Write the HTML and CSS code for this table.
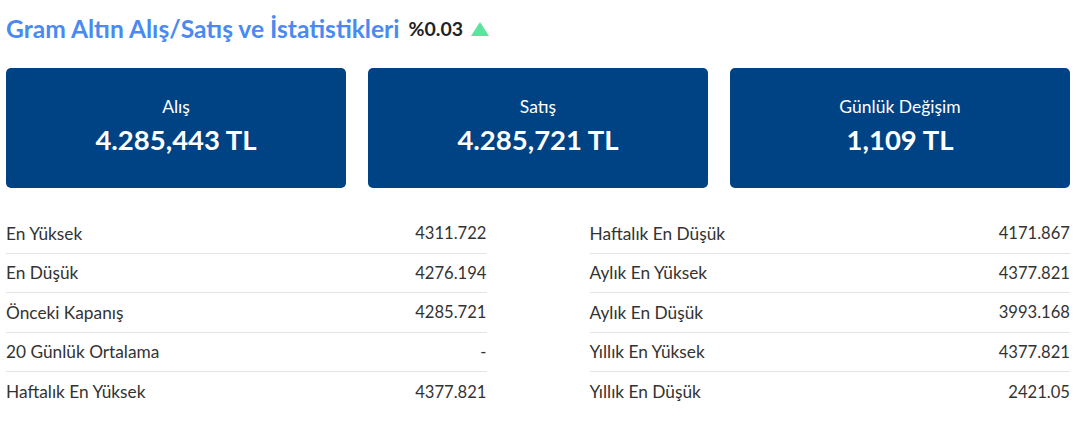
FILE: index.html
```html
<!DOCTYPE html>
<html lang="tr">
<head>
    <meta charset="UTF-8">
    <meta name="viewport" content="width=device-width, initial-scale=1.0">
    <title>Gram Altın</title>
    <link rel="stylesheet" href="styles.css">
</head>
<body>
    <section class="Gold-Section">
        <h2 class="Gold-Title">Gram Altın Alış/Satış ve İstatistikleri <span class="Change">%0.03</span> <span class="Arrow-Up"></span></h2>

        <div class="Price-Cards">
            <div class="Price-Card">
                <span class="Card-Label">Alış</span>
                <span class="Card-Value">4.285,443 TL</span>
            </div>
            <div class="Price-Card">
                <span class="Card-Label">Satış</span>
                <span class="Card-Value">4.285,721 TL</span>
            </div>
            <div class="Price-Card">
                <span class="Card-Label">Günlük Değişim</span>
                <span class="Card-Value">1,109 TL</span>
            </div>
        </div>

        <div class="Stats">
            <ul class="Stats-List">
                <li><span>En Yüksek</span><span>4311.722</span></li>
                <li><span>En Düşük</span><span>4276.194</span></li>
                <li><span>Önceki Kapanış</span><span>4285.721</span></li>
                <li><span>20 Günlük Ortalama</span><span>-</span></li>
                <li><span>Haftalık En Yüksek</span><span>4377.821</span></li>
            </ul>
            <ul class="Stats-List">
                <li><span>Haftalık En Düşük</span><span>4171.867</span></li>
                <li><span>Aylık En Yüksek</span><span>4377.821</span></li>
                <li><span>Aylık En Düşük</span><span>3993.168</span></li>
                <li><span>Yıllık En Yüksek</span><span>4377.821</span></li>
                <li><span>Yıllık En Düşük</span><span>2421.05</span></li>
            </ul>
        </div>
    </section>
</body>
</html>
```

FILE: styles.css
```css
*{
    box-sizing: border-box;
    padding: 0;
    margin: 0;
    font-family: Lato, "Open Sans", Arial, sans-serif;
}
body{
    background-color: #fff;
    color: #333;
}
.Gold-Section{
    padding: 13px 10px 0 6px;
}
.Gold-Title{
    display: flex;
    align-items: center;
    gap: 7px;
    font-size: 24.6px;
    font-weight: 700;
    color: #4a8af0;
    height: 30px;
}
.Gold-Title .Change{
    font-size: 19.5px;
    color: #222;
    margin-left: 2px;
}
.Gold-Title .Arrow-Up{
    width: 0;
    height: 0;
    border-left: 9px solid transparent;
    border-right: 9px solid transparent;
    border-bottom: 14px solid #5ce39e;
    margin-left: 1px;
    margin-top: 2px;
}
.Price-Cards{
    display: grid;
    grid-template-columns: repeat(3, 1fr);
    gap: 22px;
    margin-top: 25px;
}
.Price-Card{
    height: 120px;
    background-color: #004385;
    border-radius: 5px;
    color: #fff;
    display: flex;
    flex-direction: column;
    align-items: center;
    justify-content: center;
    gap: 7px;
    padding-bottom: 4px;
}
.Card-Label{
    font-size: 17.5px;
    line-height: 20px;
}
.Card-Value{
    font-size: 27.5px;
    font-weight: 700;
    line-height: 32px;
}
.Stats{
    display: grid;
    grid-template-columns: 1fr 1fr;
    column-gap: 103px;
    margin-top: 26px;
}
.Stats-List{
    list-style: none;
}
.Stats-List li{
    display: flex;
    justify-content: space-between;
    align-items: center;
    height: 39.5px;
    font-size: 17.3px;
    color: #333;
    border-bottom: 1px solid #e4e4e4;
}
.Stats-List li span:last-child{
    font-size: 16.6px;
}
.Stats-List li:last-child{
    border-bottom: none;
}
```
